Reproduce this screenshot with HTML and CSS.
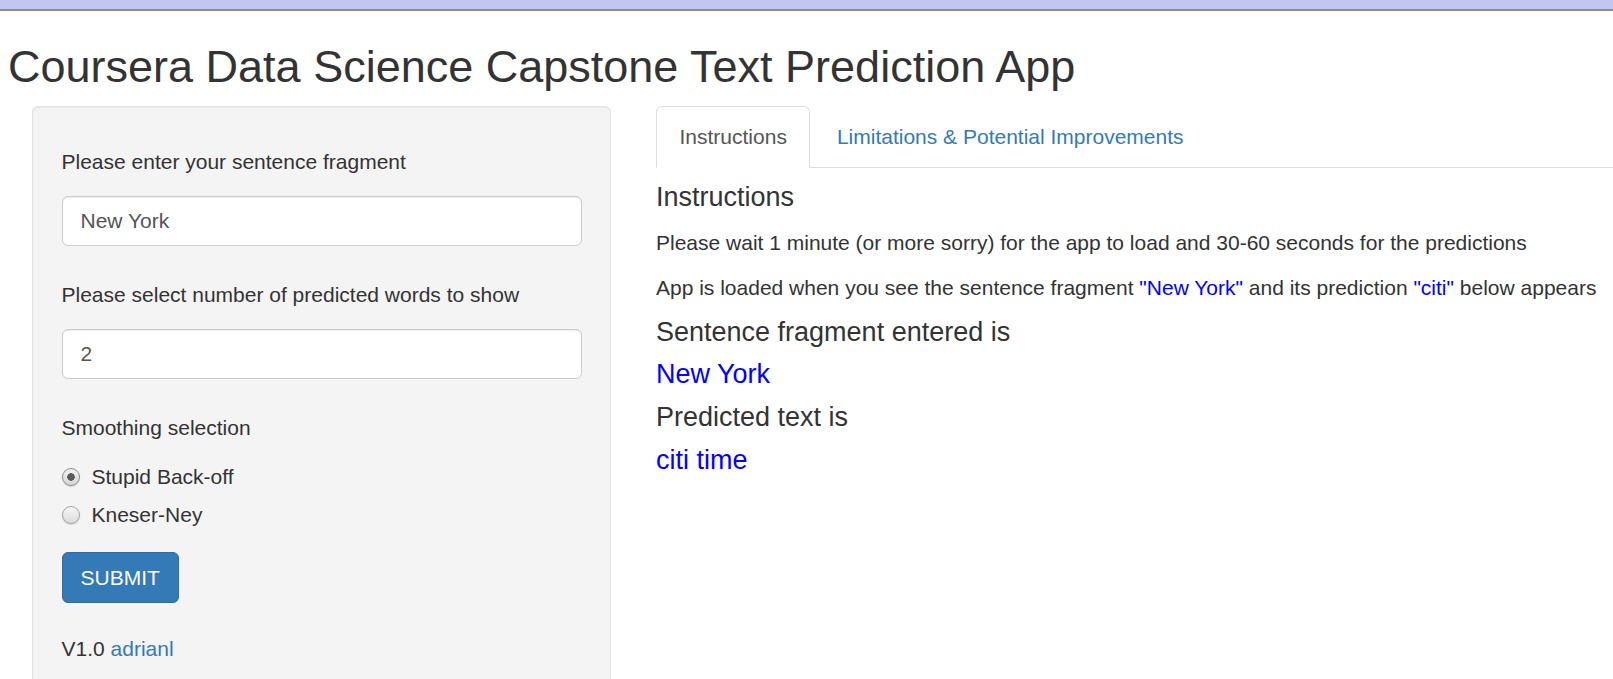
FILE: index.html
```html
<!DOCTYPE html>
<html lang="en">
<head>
<meta charset="utf-8">
<title>Coursera Data Science Capstone Text Prediction App</title>
<link rel="stylesheet" href="styles.css">
</head>
<body>
<div class="topbar"></div>
<h1 class="title">Coursera Data Science Capstone Text Prediction App</h1>
<div class="layout">
  <aside class="well">
    <div class="form-group">
      <label class="control-label" for="sentence">Please enter your sentence fragment</label>
      <input class="form-control" id="sentence" type="text" value="New York">
    </div>
    <div class="form-group">
      <label class="control-label" for="nwords">Please select number of predicted words to show</label>
      <input class="form-control" id="nwords" type="text" value="2">
    </div>
    <div class="form-group radio-group">
      <label class="control-label">Smoothing selection</label>
      <div class="radios">
        <label class="radio"><input type="radio" name="smooth" checked><span>Stupid Back-off</span></label>
        <label class="radio"><input type="radio" name="smooth"><span>Kneser-Ney</span></label>
      </div>
    </div>
    <button class="btn-submit" type="button">SUBMIT</button>
    <p class="version">V1.0 <a href="#">adrianl</a></p>
  </aside>
  <main class="main">
    <ul class="nav-tabs">
      <li class="tab active"><a href="#">Instructions</a></li>
      <li class="tab"><a href="#">Limitations &amp; Potential Improvements</a></li>
    </ul>
    <div class="tab-content">
      <h4 class="heading first">Instructions</h4>
      <p class="para">Please wait 1 minute (or more sorry) for the app to load and 30-60 seconds for the predictions</p>
      <p class="para">App is loaded when you see the sentence fragment <span class="blue">"New York"</span> and its prediction <span class="blue">"citi"</span> below appears</p>
      <h4 class="heading">Sentence fragment entered is</h4>
      <h4 class="heading blue">New York</h4>
      <h4 class="heading">Predicted text is</h4>
      <h4 class="heading blue">citi time</h4>
    </div>
  </main>
</div>
</body>
</html>
```

FILE: styles.css
```css
html, body {
  margin: 0;
  padding: 0;
  overflow: hidden;
  background: #ffffff;
}

body {
  font-family: "Liberation Sans", Arial, Helvetica, sans-serif;
  font-size: 21px;
  line-height: 30px;
  color: #333333;
}

.topbar {
  height: 9px;
  background: #c3c6f2;
  border-bottom: 2px solid #8c8c8c;
}

.title {
  font-size: 45px;
  font-weight: normal;
  line-height: 50px;
  margin: 31px 0 14px 0;
  padding-left: 8px;
  color: #333333;
  white-space: nowrap;
}

.layout {
  display: flex;
  align-items: flex-start;
}

.well {
  flex: 0 0 579px;
  width: 579px;
  box-sizing: border-box;
  margin-left: 32px;
  min-height: 700px;
  padding: 40px 28.5px 40px 28.5px;
  background: #f4f4f4;
  border: 1px solid #e3e3e3;
  border-radius: 6px;
  box-shadow: inset 0 1px 1px rgba(0, 0, 0, 0.05);
}

.form-group {
  margin-bottom: 34px;
}

.control-label {
  display: block;
  line-height: 30px;
  margin-bottom: 19px;
  font-weight: normal;
  white-space: nowrap;
}

.form-control {
  display: block;
  width: 100%;
  height: 50px;
  box-sizing: border-box;
  padding: 0 18px;
  font-family: inherit;
  font-size: 21px;
  color: #555555;
  background: #ffffff;
  border: 1px solid #cccccc;
  border-radius: 6px;
  box-shadow: inset 0 1px 1px rgba(0, 0, 0, 0.075);
  outline: none;
}

.radio-group {
  margin-bottom: 22px;
}

.radios {
  display: flex;
  flex-direction: column;
  gap: 8px;
}

.radio {
  display: flex;
  align-items: center;
  height: 30px;
  padding-left: 0;
}

.radio input {
  appearance: none;
  -webkit-appearance: none;
  width: 18px;
  height: 18px;
  margin: 0 12px 0 0;
  border: 1px solid #a3a3a3;
  border-radius: 50%;
  background: linear-gradient(#f6f6f6, #dcdcdc);
  box-shadow: 0 1px 1px rgba(0, 0, 0, 0.15);
  position: relative;
  flex: 0 0 auto;
}

.radio input:checked {
  border-color: #8e8e8e;
  background: radial-gradient(circle, #5a5a5a 0, #5a5a5a 3.5px, transparent 4px), linear-gradient(#f2f2f2, #d6d6d6);
}

.btn-submit {
  display: block;
  height: 51px;
  padding: 0 18px;
  font-family: inherit;
  font-size: 21px;
  color: #ffffff;
  background: #337ab7;
  border: 1px solid #2e6da4;
  border-radius: 6px;
  cursor: pointer;
}

.version {
  margin: 31px 0 0 0;
  line-height: 30px;
}

.version a {
  color: #337ab7;
  text-decoration: none;
}

.main {
  flex: 1 1 auto;
  margin-left: 45px;
  min-width: 0;
}

.nav-tabs {
  display: flex;
  list-style: none;
  margin: 0;
  padding: 0;
  border-bottom: 1px solid #dddddd;
}

.tab {
  margin-right: 3px;
  margin-bottom: -1px;
}

.tab a {
  display: block;
  padding: 15px 22.5px;
  line-height: 30px;
  color: #337ab7;
  text-decoration: none;
  border: 1px solid transparent;
  border-radius: 6px 6px 0 0;
  white-space: nowrap;
}

.tab.active a {
  color: #555555;
  background: #ffffff;
  border-color: #dddddd;
  border-bottom-color: transparent;
}

.heading {
  font-size: 27px;
  font-weight: normal;
  line-height: 29.7px;
  margin: 13px 0 13px 0;
  white-space: nowrap;
}

.heading.first {
  margin-top: 15px;
  margin-bottom: 15px;
}

.para {
  margin: 0 0 15px 0;
  line-height: 30px;
  white-space: nowrap;
}

.blue {
  color: #0000ff;
}
```
